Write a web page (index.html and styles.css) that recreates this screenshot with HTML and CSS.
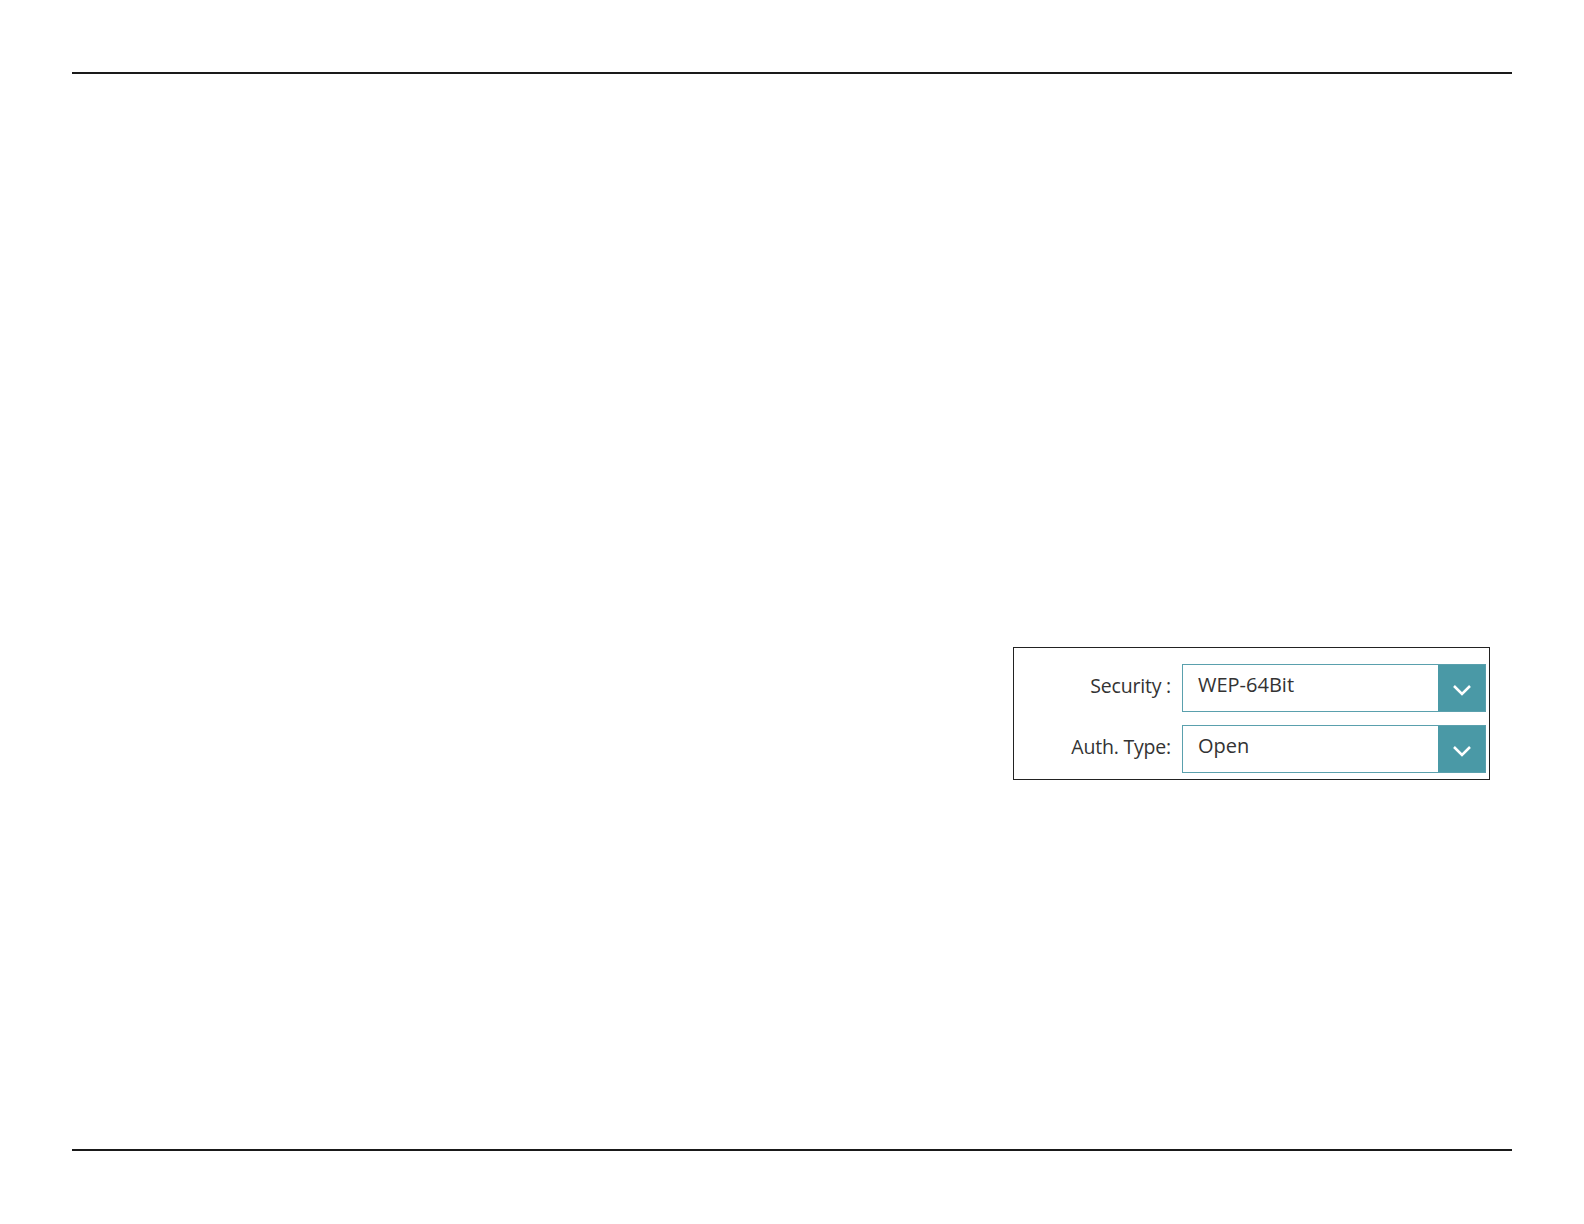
FILE: index.html
```html
<!DOCTYPE html>
<html>
<head>
<meta charset="utf-8">
<link rel="stylesheet" href="styles.css">
</head>
<body>
<div class="page">
  <div class="rule top"></div>
  <div class="content">
    <div class="panel">
      <div class="row">
        <div class="label">Security :</div>
        <div class="select">
          <div class="value">WEP-64Bit</div>
          <div class="btn"><svg width="20" height="12" viewBox="0 0 20 12"><path d="M2 2 L10 10 L18 2" fill="none" stroke="#fff" stroke-width="2.5"/></svg></div>
        </div>
      </div>
      <div class="row">
        <div class="label">Auth. Type:</div>
        <div class="select">
          <div class="value">Open</div>
          <div class="btn"><svg width="20" height="12" viewBox="0 0 20 12"><path d="M2 2 L10 10 L18 2" fill="none" stroke="#fff" stroke-width="2.5"/></svg></div>
        </div>
      </div>
    </div>
  </div>
  <div class="rule bottom"></div>
</div>
</body>
</html>
```
FILE: styles.css
```css
html, body { margin: 0; padding: 0; background: #fff; }
.page { width: 1584px; height: 1224px; padding-top: 72px; box-sizing: border-box; }
.rule { margin-left: 72px; width: 1440px; height: 2px; background: #1a1a1a; }
.content { height: 1075px; display: flex; flex-direction: column; align-items: flex-end; padding-right: 94px; box-sizing: border-box; padding-top: 573px; }
.panel { width: 477px; height: 133px; border: 1px solid #222; box-sizing: border-box; padding: 16px 3px 0 0; display: flex; flex-direction: column; gap: 13px; }
.row { display: flex; align-items: center; justify-content: flex-end; }
.label { font-family: "Open Sans", "Liberation Sans", sans-serif; font-size: 19.5px; color: #333; margin-right: 11px; letter-spacing: -0.2px; padding-bottom: 6px; }
.select { width: 304px; height: 48px; border: 1px solid #5aa0ad; box-sizing: border-box; display: flex; }
.value { flex: 1; font-family: "Open Sans", "Liberation Sans", sans-serif; font-size: 20px; color: #333; padding-left: 15px; line-height: 40px; }
.btn { width: 47px; background: #4a99a6; display: flex; align-items: center; justify-content: center; padding-top: 4px; box-sizing: border-box; }
```
